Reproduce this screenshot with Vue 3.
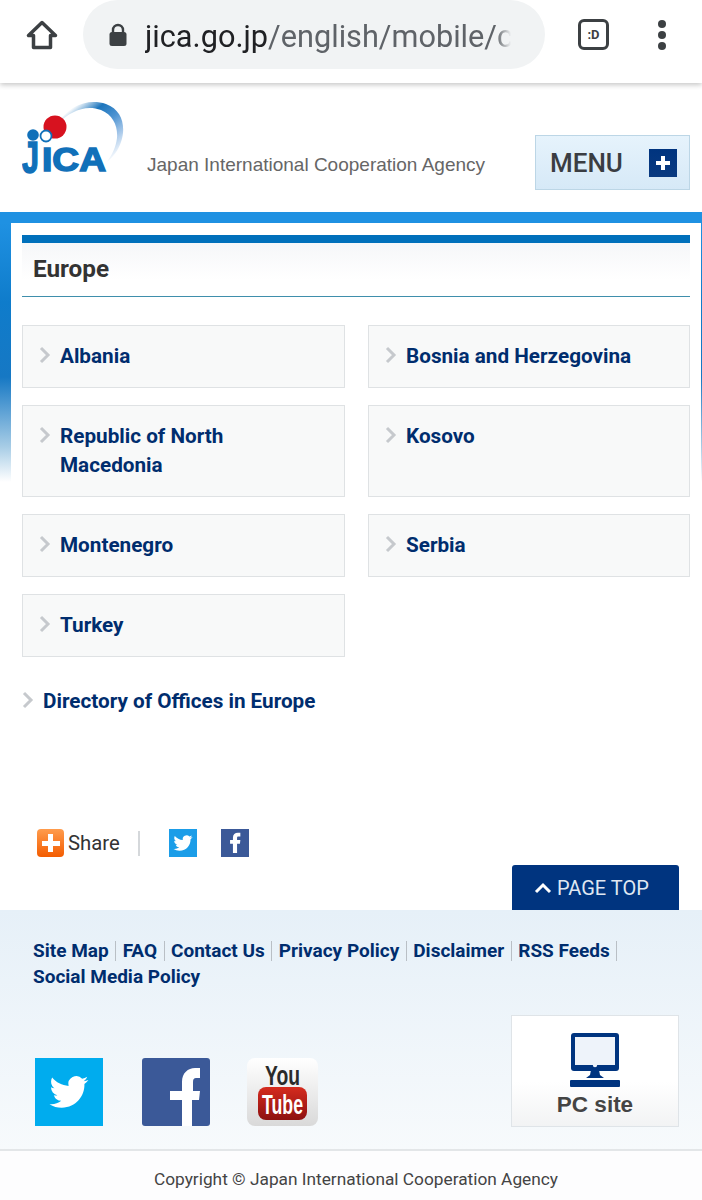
<script setup>
const countries = [
  { name: 'Albania' },
  { name: 'Bosnia and Herzegovina' },
  { name: 'Republic of North Macedonia' },
  { name: 'Kosovo' },
  { name: 'Montenegro' },
  { name: 'Serbia' },
  { name: 'Turkey' }
]

const footerLinks = ['Site Map', 'FAQ', 'Contact Us', 'Privacy Policy', 'Disclaimer', 'RSS Feeds', 'Social Media Policy']

const birdPath = 'M23.953 4.57a10 10 0 01-2.825.775 4.958 4.958 0 002.163-2.723c-.951.555-2.005.959-3.127 1.184a4.92 4.92 0 00-8.384 4.482C7.69 8.095 4.067 6.13 1.64 3.162a4.822 4.822 0 00-.666 2.475c0 1.71.87 3.213 2.188 4.096a4.904 4.904 0 01-2.228-.616v.06a4.923 4.923 0 003.946 4.827 4.996 4.996 0 01-2.212.085 4.936 4.936 0 004.604 3.417 9.867 9.867 0 01-6.102 2.105c-.39 0-.779-.023-1.17-.067a13.995 13.995 0 007.557 2.209c9.053 0 13.998-7.496 13.998-13.985 0-.21 0-.42-.015-.63A9.935 9.935 0 0024 4.59z'
const fPath = 'M40 68V42H28V33h12V24C40 15 46 10 53 10h5v10h-4c-2 0-3 1-3 4v9h7l-1 9h-7v26z'
</script>

<template>
  <div class="page">
    <div class="chrome">
      <svg class="home" width="32" height="30" viewBox="0 0 32 30">
        <path d="M16 2.500 2.500 15.500H7.500V27.500H24.500V15.500H29.500Z" fill="none" stroke="#3c4043" stroke-width="3.500" stroke-linejoin="round" />
      </svg>
      <div class="pill">
        <svg class="lock" width="20" height="24" viewBox="0 0 20 24">
          <path d="M5 10V7a5 5 0 0 1 10 0v3" fill="none" stroke="#3c4043" stroke-width="2.400" />
          <rect x="1.500" y="9" width="17" height="14" rx="2.500" fill="#3c4043" />
        </svg>
        <div class="url"><span class="host">jica.go.jp</span>/english/mobile/c</div>
      </div>
      <div class="tab-count">:D</div>
      <div class="dots"><i></i><i></i><i></i></div>
    </div>

    <header class="site-head">
      <svg class="logo" width="102" height="82" viewBox="0 0 102 82">
        <defs>
          <linearGradient id="arc" x1="0.100" y1="0.200" x2="0.800" y2="1">
            <stop offset="0" stop-color="#ffffff" />
            <stop offset="0.250" stop-color="#1c75bc" />
            <stop offset="0.500" stop-color="#4e94d2" />
            <stop offset="0.750" stop-color="#a9c9ea" />
            <stop offset="1" stop-color="#ffffff" />
          </linearGradient>
        </defs>
        <path d="M36 23C46 6 66-2 84 4c17 6 20 24 15 38-3 9-8 15-14 20 5-7 9-15 10-24 1-12-4-23-16-28-16-6-31 2-43 13z" fill="url(#arc)" />
        <circle cx="33" cy="27" r="11.500" fill="#d7121f" />
        <circle cx="11" cy="35" r="5.800" fill="#1170b9" />
        <circle cx="24" cy="36" r="5.500" fill="#fff" stroke="#1170b9" stroke-width="1.800" />
        <text x="0" y="73" class="logo-j" textLength="17" lengthAdjust="spacingAndGlyphs">J</text>
        <text x="20" y="71" class="logo-ica" textLength="64" lengthAdjust="spacingAndGlyphs">ICA</text>
      </svg>
      <div class="agency">Japan International Cooperation Agency</div>
      <div class="menu-btn">
        <span>MENU</span>
        <b class="plus-box"><i class="plus"></i></b>
      </div>
    </header>

    <main class="band">
      <div class="panel">
        <h1 class="title">Europe</h1>

        <ul class="grid">
          <li v-for="c in countries" :key="c.name" class="card">
            <svg class="chev" width="12" height="18" viewBox="0 0 12 18">
              <path d="M2 2l7 7-7 7" fill="none" stroke="#c6c9cd" stroke-width="3" />
            </svg>
            <span class="card-name">{{ c.name }}</span>
          </li>
        </ul>

        <div class="directory">
          <svg class="chev" width="12" height="18" viewBox="0 0 12 18">
            <path d="M2 2l7 7-7 7" fill="none" stroke="#c6c9cd" stroke-width="3" />
          </svg>
          <span>Directory of Offices in Europe</span>
        </div>

        <div class="share">
          <span class="share-icon"><i class="plus orange"></i></span>
          <span class="share-label">Share</span>
          <span class="share-sep"></span>
          <svg class="tw-small" width="28" height="28" viewBox="0 0 28 28">
            <rect width="28" height="28" fill="#1b9de8" />
            <path :d="birdPath" fill="#fff" transform="translate(4.500 4.500) scale(.79)" />
          </svg>
          <svg class="fb-small" width="28" height="28" viewBox="0 0 68 68">
            <rect width="68" height="68" fill="#3b5998" />
            <path d="M29 58V36H22V27h7V21C29 13 34 9 41 9h6v9h-4c-3 0-4 1-4 4v5h8l-1 9h-7v22z" fill="#fff" />
          </svg>
        </div>

        <div class="top-row">
          <div class="page-top">
            <svg width="18" height="12" viewBox="0 0 18 12">
              <path d="M2 10l7-7 7 7" fill="none" stroke="#fff" stroke-width="3" />
            </svg>
            <span>PAGE TOP</span>
          </div>
        </div>
      </div>
    </main>

    <footer class="foot">
      <div class="links">
        <span v-for="(l, i) in footerLinks" :key="l" class="link" :class="{ last: i === footerLinks.length - 1 }">{{ l }}</span>
      </div>

      <div class="foot-row">
        <div class="socials">
          <svg width="68" height="68" viewBox="0 0 68 68">
            <rect width="68" height="68" fill="#00acee" />
            <path :d="birdPath" fill="#fff" transform="translate(14.500 14.500) scale(1.620)" />
          </svg>
          <svg width="68" height="68" viewBox="0 0 68 68">
            <rect width="68" height="68" rx="3" fill="#3b5998" />
            <path :d="fPath" fill="#fff" />
          </svg>
          <svg width="71" height="68" viewBox="0 0 71 68">
            <defs>
              <linearGradient id="ytbg" x1="0" y1="0" x2="0" y2="1">
                <stop offset="0" stop-color="#ffffff" />
                <stop offset="1" stop-color="#d9d9d9" />
              </linearGradient>
              <linearGradient id="ytred" x1="0" y1="0" x2="0" y2="1">
                <stop offset="0" stop-color="#d52b1e" />
                <stop offset="1" stop-color="#8d1111" />
              </linearGradient>
            </defs>
            <rect width="71" height="68" rx="8" fill="url(#ytbg)" />
            <text x="18" y="27" class="yt-you" textLength="35" lengthAdjust="spacingAndGlyphs">You</text>
            <rect x="11" y="29" width="49" height="33" rx="8" fill="url(#ytred)" />
            <text x="15" y="56" class="yt-tube" textLength="41" lengthAdjust="spacingAndGlyphs">Tube</text>
          </svg>
        </div>

        <div class="pc-site">
          <svg width="50" height="54" viewBox="0 0 50 54">
            <rect x="1" y="0" width="48" height="38" rx="3" fill="#00347f" />
            <rect x="5" y="4" width="40" height="28" fill="#eef3fa" />
            <circle cx="25" cy="32" r="2.200" fill="#eef3fa" />
            <path d="M21 37h8l1 5 4 3H16l4-3z" fill="#00347f" />
            <rect x="0" y="47" width="50" height="7" rx="1" fill="#00347f" />
          </svg>
          <span>PC site</span>
        </div>
      </div>

      <div class="copyright">Copyright © Japan International Cooperation Agency</div>
    </footer>
  </div>
</template>

<style scoped>
.page {
  width: 702px;
  height: 1200px;
  overflow: hidden;
  background: #fff;
  font-family: Roboto, 'Liberation Sans', sans-serif;
}

.chrome {
  height: 83px;
  box-sizing: border-box;
  padding-bottom: 14px;
  display: flex;
  align-items: center;
  background: #fff;
  box-shadow: 0 2px 5px rgba(0, 0, 0, .22);
  position: relative;
}

.home { margin-left: 26px; }

.pill {
  margin-left: 25px;
  width: 462px;
  height: 69px;
  box-sizing: border-box;
  border-radius: 35px;
  background: #f1f3f4;
  display: flex;
  align-items: center;
  padding-left: 25px;
}

.lock { margin-right: 17px; }

.url {
  width: 366px;
  padding-top: 3px;
  overflow: hidden;
  white-space: nowrap;
  font-size: 30.700px;
  color: #5f6368;
  -webkit-mask-image: linear-gradient(90deg, #000 96%, transparent);
  mask-image: linear-gradient(90deg, #000 96%, transparent);
}

.host { color: #202124; }

.tab-count {
  margin-left: 33px;
  width: 31px;
  height: 31px;
  box-sizing: border-box;
  border: 3px solid #3c4043;
  border-radius: 6px;
  font-size: 13px;
  font-weight: 700;
  color: #3c4043;
  display: flex;
  align-items: center;
  justify-content: center;
}

.dots {
  margin-left: 49px;
  display: flex;
  flex-direction: column;
  gap: 3px;
}

.dots i {
  display: block;
  width: 8px;
  height: 8px;
  border-radius: 50%;
  background: #3c4043;
}

.site-head {
  height: 129px;
  position: relative;
  display: flex;
  align-items: flex-start;
  box-sizing: border-box;
  padding: 17px 12px 0 22px;
}

.logo { flex: none; }

.logo-j {
  font: 700 44px 'Liberation Sans', sans-serif;
  fill: #1170b9;
  stroke: #1170b9;
  stroke-width: 1.500;
}

.logo-ica {
  font: 700 33px 'Liberation Sans', sans-serif;
  fill: #1170b9;
  stroke: #1170b9;
  stroke-width: 1.500;
}

.agency {
  margin: 54px 0 0 23px;
  width: 343px;
  white-space: nowrap;
  font: 19px 'Liberation Sans', sans-serif;
  color: #666;
}

.menu-btn {
  margin: 35px 0 0 auto;
  width: 155px;
  height: 55px;
  box-sizing: border-box;
  border: 1px solid #bcd6e6;
  background: linear-gradient(#e6f3fc, #d6e9f7);
  display: flex;
  align-items: center;
  justify-content: space-between;
  padding: 0 12px 0 14px;
  font: 500 26px Roboto, sans-serif;
  color: #3a3d42;
}

.plus-box {
  width: 28px;
  height: 28px;
  background: linear-gradient(#00347f, #0a3a80);
  display: flex;
  align-items: center;
  justify-content: center;
}

.plus {
  display: block;
  width: 14px;
  height: 14px;
  background:
    linear-gradient(#fff, #fff) center / 14px 4px no-repeat,
    linear-gradient(#fff, #fff) center / 4px 14px no-repeat;
}

.band {
  height: 698px;
  box-sizing: border-box;
  padding: 11px 1px 0 11px;
  background: linear-gradient(#1f91e2 0, #1f91e2 11px, #0f7ccb 90px, #1678c4 165px, #a8cde6 235px, #fff 270px) no-repeat;
}

.panel {
  height: 100%;
  box-sizing: border-box;
  padding: 12px 11px 0;
  background: #fff;
  position: relative;
  display: flex;
  flex-direction: column;
}

.title {
  margin: 0;
  height: 62px;
  box-sizing: border-box;
  border-top: 8px solid #0070bb;
  border-bottom: 1px solid #3f8fac;
  padding-left: 11px;
  background: linear-gradient(#f6f7f9, #fff 70%);
  font-size: 24.300px;
  font-weight: 700;
  line-height: 52px;
  color: #333;
}

.grid {
  list-style: none;
  margin: 28px 0 0;
  padding: 0;
  display: grid;
  grid-template-columns: 323px 322px;
  column-gap: 23px;
  row-gap: 17px;
}

.card {
  box-sizing: border-box;
  border: 1px solid #dfe2e4;
  background: #f8f9f9;
  padding: 16px 40px 16px 16px;
  display: flex;
  align-items: flex-start;
  gap: 9px;
  font-size: 20.700px;
  font-weight: 700;
  line-height: 29px;
  color: #002d6e;
}

.chev {
  flex: none;
  margin-top: 4px;
}

.card-name { display: block; }

.directory {
  margin-top: 30px;
  display: flex;
  align-items: flex-start;
  gap: 9px;
  font-size: 20.700px;
  font-weight: 700;
  line-height: 29px;
  color: #002d6e;
}

.share {
  margin: 113px 0 0 15px;
  display: flex;
  align-items: center;
  height: 28px;
}

.share-icon {
  width: 27px;
  height: 28px;
  border-radius: 4px;
  background: linear-gradient(#ff9c4d, #f35c00);
  display: flex;
  align-items: center;
  justify-content: center;
}

.plus.orange {
  width: 18px;
  height: 18px;
  background:
    linear-gradient(#fff, #fff) center / 18px 5px no-repeat,
    linear-gradient(#fff, #fff) center / 5px 18px no-repeat;
}

.share-label {
  margin-left: 4px;
  font-size: 20.300px;
  color: #333;
}

.share-sep {
  margin-left: 18px;
  width: 2px;
  height: 25px;
  background: #d5d8db;
}

.tw-small { margin-left: 29px; }
.fb-small { margin-left: 24px; }

.top-row {
  margin-top: auto;
  display: flex;
  justify-content: flex-end;
  padding-right: 11px;
}

.page-top {
  width: 167px;
  height: 45px;
  box-sizing: border-box;
  border-radius: 3px 3px 0 0;
  background: #00347f;
  padding: 0 0 0 22px;
  display: flex;
  align-items: center;
  gap: 5px;
  font: 400 20px Roboto, sans-serif;
  color: #dfe7f2;
}

.foot {
  height: 290px;
  box-sizing: border-box;
  padding-top: 28px;
  background: linear-gradient(#e6f0f8, #f7fafc 240px, #fdfdfe 241px);
  display: flex;
  flex-direction: column;
}

.links {
  padding: 0 60px 0 33px;
  display: flex;
  flex-wrap: wrap;
  font-size: 19px;
  font-weight: 700;
  line-height: 26px;
  color: #002d6e;
}

.link {
  white-space: nowrap;
  display: flex;
  align-items: center;
}

.link::after {
  content: '';
  width: 1px;
  height: 20px;
  margin: 0 6.500px;
  background: #b9bfc5;
}

.link.last::after { display: none; }

.foot-row {
  margin-top: 25px;
  height: 112px;
  padding: 0 23px 0 35px;
  display: flex;
  justify-content: space-between;
  align-items: flex-end;
}

.socials {
  display: flex;
  align-items: flex-end;
  gap: 39px;
  margin-bottom: 1px;
}

.socials svg { display: block; }
.socials svg:nth-child(3) { margin-left: -2px; }

.pc-site {
  width: 168px;
  height: 112px;
  box-sizing: border-box;
  border: 1px solid #dfe4e8;
  background: linear-gradient(#fff 60%, #f2f3f4);
  padding-top: 17px;
  display: flex;
  flex-direction: column;
  align-items: center;
  gap: 5px;
  font: 700 22.500px 'Liberation Sans', sans-serif;
  color: #444;
}

.copyright {
  margin-top: 22px;
  border-top: 2px solid #e3e6e8;
  height: 50px;
  padding-left: 10px;
  text-align: center;
  font-size: 17.300px;
  line-height: 57px;
  color: #444;
}

.yt-you {
  font: 700 28px 'Liberation Sans', sans-serif;
  fill: #2a2a2a;
}

.yt-tube {
  font: 700 27px 'Liberation Sans', sans-serif;
  fill: #fff;
}
</style>

<style>
body { margin: 0; }
</style>
